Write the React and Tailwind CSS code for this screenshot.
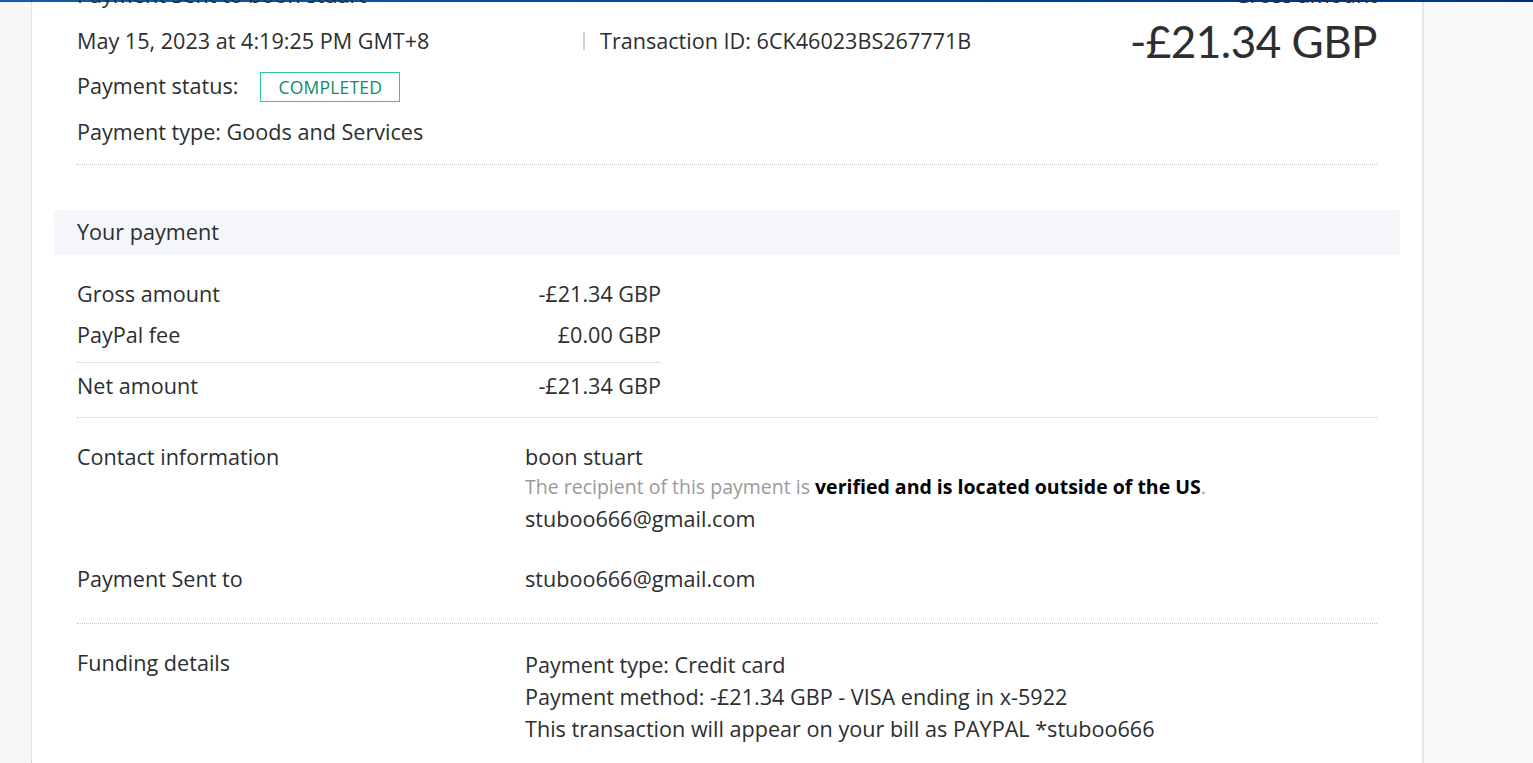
import React from "react";

const font = { fontFamily: "'Open Sans', Lato, sans-serif" };
const lato = { fontFamily: "Lato, 'Open Sans', sans-serif" };

function Divider({ className = "" }) {
  return <div className={"border-t border-dotted border-[#c8c8c8] " + className} />;
}

function Row({ label, children, className = "" }) {
  return (
    <div className={"flex " + className}>
      <div className="w-[448px] shrink-0">{label}</div>
      <div className="flex-1">{children}</div>
    </div>
  );
}

export default function App() {
  return (
    <div className="h-[763px] overflow-hidden bg-[#f9f9f9] text-[#2c2e2f]" style={font}>
      <div className="h-[2px] bg-gradient-to-r from-[#0b5fae] to-[#00308a]" />
      <div className="flex h-full">
        <div className="w-[32px] shrink-0 border-r border-dotted border-[#cfcfcf] bg-[#f7f7f7]" />
        <div className="w-[1392px] shrink-0 border-r-2 border-[#e6e6e6] bg-white">
          {/* header */}
          <div className="px-[45px]">
            <div className="-mt-[20px] flex items-end justify-between text-[21.6px] leading-[26px]">
              <span>Payment Sent to boon stuart</span>
              <span>Gross amount</span>
            </div>
            <div className="flex items-start justify-between">
              <div className="text-[21.6px]">
                <div className="mt-[19px] flex h-[28px] items-center">
                  <span className="w-[506px]">May 15, 2023 at 4:19:25 PM GMT+8</span>
                  <span className="mr-[15px] h-[18px] w-[2px] bg-[#d0d0d0]" />
                  <span>Transaction ID: 6CK46023BS267771B</span>
                </div>
                <div className="mt-[16px] flex h-[30px] items-center">
                  <span>Payment status:</span>
                  <span className="ml-[22px] mt-[2px] flex h-[30px] w-[140px] items-center justify-center border border-[#2dc99a] text-[17.5px] tracking-[0.2px] text-[#138a6a]">
                    COMPLETED
                  </span>
                </div>
                <div className="mt-[16px] flex h-[30px] items-center">Payment type: Goods and Services</div>
              </div>
              <div className="mt-[8px] text-[44px] leading-[50px] tracking-[-0.5px]" style={lato}>
                -£21.34 GBP
              </div>
            </div>
            <Divider className="mt-[17px]" />
          </div>

          {/* your payment band */}
          <div className="mx-[22px] mt-[45px] flex h-[45px] items-center bg-[#f5f6fa] px-[23px] text-[21.6px]">
            Your payment
          </div>

          <div className="px-[45px] text-[21.6px]">
            <div className="w-[584px]">
              <div className="mt-[25px] flex h-[28px] items-center justify-between">
                <span>Gross amount</span>
                <span>-£21.34 GBP</span>
              </div>
              <div className="mt-[13px] flex h-[28px] items-center justify-between">
                <span>PayPal fee</span>
                <span>£0.00 GBP</span>
              </div>
              <Divider className="mt-[13px]" />
              <div className="mt-[9px] flex h-[28px] items-center justify-between">
                <span>Net amount</span>
                <span>-£21.34 GBP</span>
              </div>
            </div>
            <Divider className="mt-[17px]" />

            <Row label={<div className="flex h-[28px] items-center">Contact information</div>} className="mt-[25px]">
              <div className="flex h-[28px] items-center">boon stuart</div>
              <div className="flex h-[32px] items-center text-[19.5px] text-[#9a9a9a]">
                <span>
                  The recipient of this payment is{" "}
                  <span className="font-bold text-black">verified and is located outside of the US</span>.
                </span>
              </div>
              <div className="flex h-[32px] items-center">stuboo666@gmail.com</div>
            </Row>

            <Row label={<div className="flex h-[28px] items-center">Payment Sent to</div>} className="mt-[30px]">
              <div className="flex h-[28px] items-center">stuboo666@gmail.com</div>
            </Row>
            <Divider className="mt-[30px]" />

            <Row label={<div className="flex h-[28px] items-center">Funding details</div>} className="mt-[25px]">
              <div className="flex h-[32px] items-center">Payment type: Credit card</div>
              <div className="flex h-[32px] items-center">Payment method: -£21.34 GBP - VISA ending in x-5922</div>
              <div className="flex h-[32px] items-center">This transaction will appear on your bill as PAYPAL *stuboo666</div>
            </Row>
          </div>
        </div>
        <div className="flex-1 bg-[#f9f9f9]" />
      </div>
    </div>
  );
}
